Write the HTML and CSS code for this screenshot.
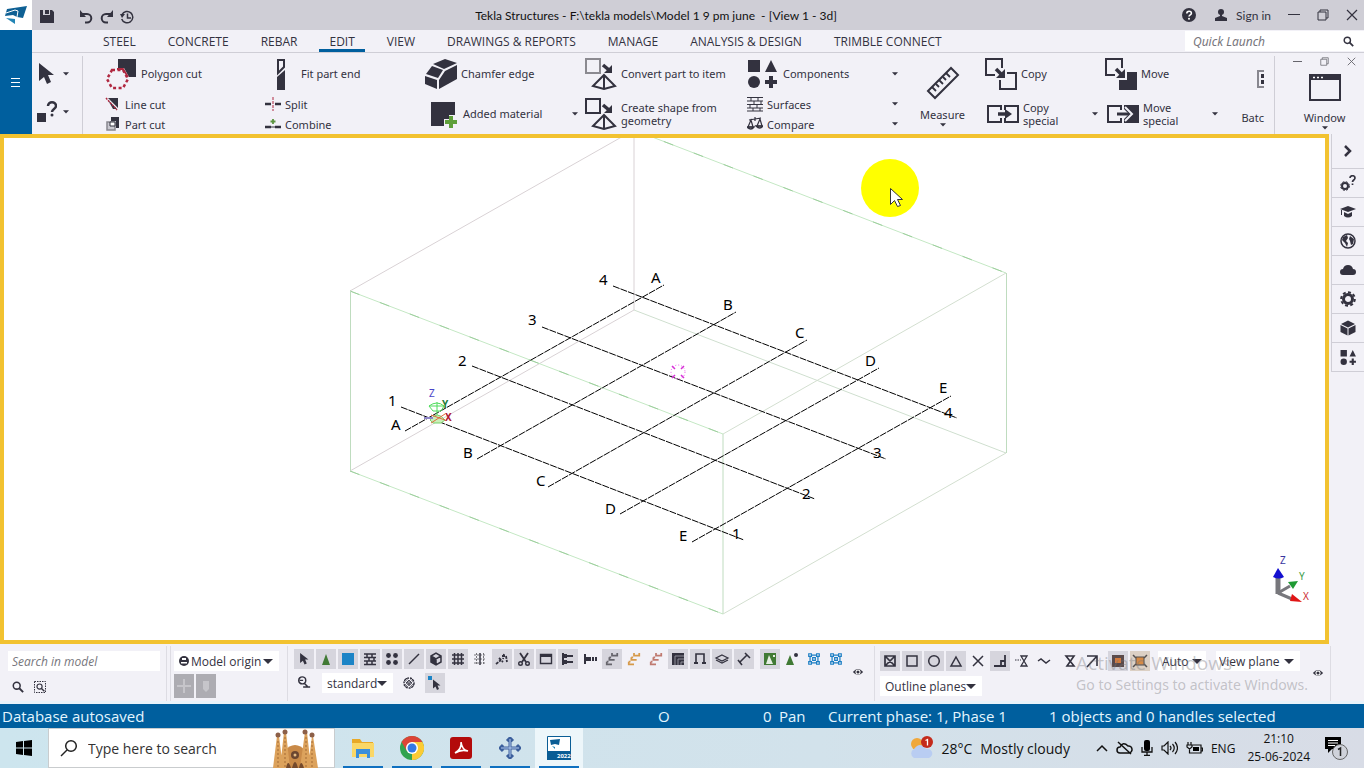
FILE: index.html
```html
<!DOCTYPE html>
<html lang="en">
<head>
    <meta charset="UTF-8">
    <meta name="viewport" content="width=device-width, initial-scale=1.0">
    <title>Tekla Structures</title>
    <link rel="stylesheet" href="styles.css">
</head>
<body>
    <!-- Shared icon shapes -->
    <svg class="defs" aria-hidden="true">
        <symbol id="caret" viewBox="0 0 8 5"><path d="M0 0h8L4 4.500z" fill="#33323f"/></symbol>
        <symbol id="lens" viewBox="0 0 14 14"><circle cx="5.500" cy="5.500" r="4" fill="none" stroke="#33323f" stroke-width="1.800"/><path d="M8.500 8.500l4.500 4.500" stroke="#33323f" stroke-width="2.200"/></symbol>
        <symbol id="eye" viewBox="0 0 14 10"><path d="M1 5q6-7 12 0q-6 7-12 0z" fill="#33323f"/><circle cx="7" cy="5" r="3" fill="#fff"/><circle cx="7" cy="5" r="1.800" fill="#33323f"/></symbol>
        <symbol id="cursor" viewBox="0 0 18 24"><path d="M2 1v18l5-4 3 7 4-2-3-7h6z" fill="#33323f"/></symbol>
        <symbol id="shapes" viewBox="0 0 32 32"><path d="M1 2h12v12H1zM24 2l6 12H18z" fill="#33323f"/><circle cx="7" cy="24" r="6" fill="#33323f"/><path d="M22 18h4v4h4v4h-4v4h-4v-4h-4v-4h4z" fill="#33323f"/></symbol>
        <symbol id="to-shape" viewBox="0 0 32 32"><path d="M18 7l6 5" stroke="#33323f" stroke-width="3.500"/><path d="M27 7v8h-8z" fill="#33323f"/><path d="M19 17L8 28l11 3 11-3zM19 17v14" fill="none" stroke="#33323f" stroke-width="2"/></symbol>
        <symbol id="restore" viewBox="0 0 12 12"><path d="M1 3h8v8H1zM3 3V1h8v8H9" fill="none" stroke="currentColor"/></symbol>
        <symbol id="close" viewBox="0 0 12 12"><path d="M1 1l10 10M11 1L1 11" stroke="currentColor" stroke-width="1.200"/></symbol>
        <symbol id="steps" viewBox="0 0 16 16"><path d="M8 1v3h6V1M5 6v3h6M2 11v3h6M5 6h2M2 11h2" fill="none" stroke="currentColor" stroke-width="2"/></symbol>
        <symbol id="nodes" viewBox="0 0 16 16"><path d="M2 2h3v3H2zM11 2h3v3h-3zM2 11h3v3H2zM11 11h3v3h-3zM6.500 6.500h3v3h-3zM5 3.500h6M5 12.500h6M3.500 5v6M12.500 5v6" fill="none" stroke="#1c7fc4" stroke-width="1.400"/></symbol>
    </svg>

    <div class="app">
        <header class="header">
            <div class="brand">
                <svg width="24" height="20" viewBox="0 0 24 20"><path d="M3 4L23 1l-4 12-6-1-4-2-8 1z" fill="#0e6094"/><path d="M2 13l9 1v5z" fill="#2385b5"/><path d="M2 8l9-3 3 1-1 6" fill="none" stroke="#fff"/></svg>
            </div>
            <div class="titlebar">
                <div class="quick-access">
                    <button aria-label="Save"><svg width="14" height="13" viewBox="0 0 14 13"><path d="M0 0h3v5h7V0h2l2 2v11H0z" fill="#33323f"/><path d="M5 0h3v4H5zM8 0h1v4H8z" fill="#33323f"/></svg></button>
                    <button aria-label="Undo" class="undo"><svg width="13" height="14" viewBox="0 0 13 14"><path d="M2 4h5a4.300 4.300 0 0 1 0 8.600H5" fill="none" stroke="#33323f" stroke-width="2"/><path d="M0 0v7h6z" fill="#33323f"/></svg></button>
                    <button aria-label="Redo"><svg width="13" height="14" viewBox="0 0 13 14"><path d="M11 4H6a4.300 4.300 0 0 0 0 8.600h2" fill="none" stroke="#33323f" stroke-width="2"/><path d="M13 0v7H7z" fill="#33323f"/></svg></button>
                    <button aria-label="History"><svg width="14" height="14" viewBox="0 0 14 14"><path d="M2 4.500a5.700 5.700 0 1 1-.3 4.500M7.500 3.500V8H11" fill="none" stroke="#33323f" stroke-width="1.500"/><path d="M0 4h5L2 8z" fill="#33323f"/></svg></button>
                </div>
                <h1>Tekla Structures - F:\tekla models\Model 1 9 pm june&nbsp; - [View 1 - 3d]</h1>
                <div class="account">
                    <button aria-label="Help"><svg width="14" height="14" viewBox="0 0 14 14"><circle cx="7" cy="7" r="7" fill="#33323f"/><path d="M4.800 5.500c0-3 4.600-3 4.600-.3C9.400 6.800 7 6.800 7 8.600" fill="none" stroke="#fff" stroke-width="1.600"/><circle cx="7" cy="10.800" r="1" fill="#fff"/></svg></button>
                    <button class="signin"><svg width="12" height="12" viewBox="0 0 12 12"><circle cx="6" cy="3" r="3" fill="#33323f"/><path d="M5 5h2v2l5 2v3H0V9l5-2z" fill="#33323f"/></svg>Sign in</button>
                    <button aria-label="Minimize"><svg width="12" height="12" viewBox="0 0 12 12"><path d="M0 5.500h12" stroke="#33323f"/></svg></button>
                    <button aria-label="Restore"><svg width="12" height="12"><use href="#restore"/></svg></button>
                    <button aria-label="Close"><svg width="12" height="12"><use href="#close"/></svg></button>
                </div>
            </div>

            <button class="menu" aria-label="Menu"><svg width="10" height="10" viewBox="0 0 10 10"><path d="M0 1.500h9M0 5.500h9M0 9.500h9" stroke="#fff"/></svg></button>

            <div class="tabrow">
                <nav class="tabs">
                    <a href="#steel">STEEL</a>
                    <a href="#concrete">CONCRETE</a>
                    <a href="#rebar">REBAR</a>
                    <a href="#edit" class="active">EDIT</a>
                    <a href="#view">VIEW</a>
                    <a href="#drawings">DRAWINGS &amp; REPORTS</a>
                    <a href="#manage">MANAGE</a>
                    <a href="#analysis">ANALYSIS &amp; DESIGN</a>
                    <a href="#trimble">TRIMBLE CONNECT</a>
                </nav>
                <div class="launch">
                    <input type="text" placeholder="Quick Launch" aria-label="Quick Launch">
                    <svg width="11" height="11"><use href="#lens" width="11" height="11"/></svg>
                </div>
            </div>

            <div class="ribbon">
                <div class="col pick">
                    <button class="big" aria-label="Select"><svg width="18" height="24"><use href="#cursor"/></svg><svg class="caret"><use href="#caret"/></svg></button>
                    <button class="big" aria-label="Inquire"><svg width="20" height="22" viewBox="0 0 20 22"><path d="M0 12h9v9H0z" fill="#33323f"/><path d="M11 5c0-5 8-5 8 0 0 3-4 3-4 6" fill="none" stroke="#33323f" stroke-width="2.500"/><circle cx="15" cy="14" r="1.500" fill="#33323f"/></svg><svg class="caret"><use href="#caret"/></svg></button>
                </div>

                <div class="col">
                    <button class="big"><svg width="32" height="32" viewBox="0 0 32 32"><path d="M13 1h18v18h-7l-5-9h-6z" fill="#33323f"/><path d="M7 12h11l5 9-5 9H7l-5-9z" fill="none" stroke="#b02840" stroke-width="2.500" stroke-dasharray="3 2.500"/><path d="M12 11h6l5 8" fill="none" stroke="#b02840" stroke-width="1.800"/></svg>Polygon cut</button>
                    <button class="small"><svg width="16" height="14" viewBox="0 0 16 14"><path d="M3 1h10v10z" fill="#33323f"/><path d="M3 3l9 9H8z" fill="#33323f"/><path d="M1 1l11 12" stroke="#b02840" stroke-width="1.500" stroke-dasharray="2 1"/></svg>Line cut</button>
                    <button class="small"><svg width="16" height="14" viewBox="0 0 16 14"><path d="M6 0h8v11h-3V4H6z" fill="#33323f"/><path d="M2 5h8v8H2z" fill="#c9c8d0" stroke="#88878f" stroke-width="1.500"/><path d="M5 5h5v4H5z" fill="#fff" stroke="#33323f"/></svg>Part cut</button>
                </div>

                <div class="col">
                    <button class="big"><svg width="32" height="32" viewBox="0 0 32 32"><path d="M13 2h6v7l-6 6z" fill="none" stroke="#33323f" stroke-width="2"/><path d="M12 19l8-7v20h-8z" fill="#33323f"/></svg>Fit part end</button>
                    <button class="small"><svg width="16" height="14" viewBox="0 0 16 14"><path d="M0 7h6M10 7h6" stroke="#33323f" stroke-width="2.500"/><path d="M8 0v14" stroke="#b02840" stroke-dasharray="3 1"/></svg>Split</button>
                    <button class="small"><svg width="16" height="14" viewBox="0 0 16 14"><path d="M0 10h6M10 10h6" stroke="#33323f" stroke-width="2.500"/><path d="M8 2v5M5.500 4.500h5" stroke="#5c9440" stroke-width="1.800"/><path d="M6 10h4" stroke="#33323f"/></svg>Combine</button>
                </div>

                <div class="col">
                    <button class="big"><svg width="32" height="32" viewBox="0 0 32 32"><path d="M8 6L20 1l12 4-13 6zM7 8l11 4-5 8L1 16zM0 18l12 4v9L0 26zM20 13l12-6v14L14 31v-9z" fill="#33323f"/></svg>Chamfer edge</button>
                    <button class="big"><svg width="34" height="32" viewBox="0 0 34 32"><path d="M6 4h24v13h-6v4h-5v7H6z" fill="#33323f"/><path d="M26 18v12M20 24h12" stroke="#5fa03a" stroke-width="4"/></svg>Added material<svg class="caret"><use href="#caret"/></svg></button>
                </div>

                <div class="col">
                    <button class="big"><svg width="32" height="32" viewBox="0 0 32 32"><path d="M1 1h14v14H1z" fill="none" stroke="#8b8a90" stroke-width="2"/><use href="#to-shape" width="32" height="32"/></svg>Convert part to item</button>
                    <button class="big"><svg width="32" height="32" viewBox="0 0 32 32"><path d="M1 1h14v14H1z" fill="none" stroke="#33323f" stroke-width="2"/><use href="#to-shape" width="32" height="32"/></svg><span>Create shape from<br>geometry</span></button>
                </div>

                <div class="col tools">
                    <button class="big"><svg width="32" height="32"><use href="#shapes"/></svg>Components<svg class="caret"><use href="#caret"/></svg></button>
                    <button class="small"><svg width="16" height="16" viewBox="0 0 16 16"><path d="M0 1.500h16M0 5h16M0 8.500h16M0 12h16M0 15h16" stroke="#33323f" stroke-width="1.200"/><path d="M4 1v4M11 1v4M7 5v4M14 5v4M3 8v4M10 8v4M6 12v3M13 12v3" stroke="#33323f"/></svg>Surfaces<svg class="caret"><use href="#caret"/></svg></button>
                    <button class="small"><svg width="16" height="16" viewBox="0 0 16 16"><path d="M2 4l12-2M8 1v4M4 4l-3 7h5zM13 3l-3 7h5z" fill="none" stroke="#33323f" stroke-width="1.200"/><path d="M0 11h7q-3 4-7 0zM9 10h7q-3 4-7 0z" fill="none" stroke="#33323f" stroke-width="1.300"/></svg>Compare<svg class="caret"><use href="#caret"/></svg></button>
                </div>

                <button class="tall measure">
                    <svg width="34" height="34" viewBox="0 0 34 34"><path d="M2 25L25 2l7 7L9 32z" fill="none" stroke="#33323f" stroke-width="2"/><path d="M6 21l4 4M10 18l3 3M13 14l4 4M17 11l3 3M20 7l4 4" stroke="#33323f" stroke-width="1.800"/></svg>
                    Measure
                    <svg class="caret"><use href="#caret"/></svg>
                </button>

                <div class="col narrow">
                    <button class="big"><svg width="32" height="32" viewBox="0 0 32 32"><path d="M10 17H1V1h16v9M22 15h9v16H15v-9" fill="none" stroke="#33323f" stroke-width="2"/><path d="M11 11l6 6" stroke="#33323f" stroke-width="3.500"/><path d="M20 11v9h-9z" fill="#33323f"/></svg>Copy</button>
                    <button class="big"><svg width="32" height="20" viewBox="0 0 32 20"><path d="M14 6V2H1v16h13v-4M18 6V2h13v16H18v-4" fill="none" stroke="#33323f" stroke-width="2"/><path d="M11 10h8" stroke="#33323f" stroke-width="3.500"/><path d="M18 5l7 5-7 5z" fill="#33323f"/></svg><span>Copy<br>special</span><svg class="caret"><use href="#caret"/></svg></button>
                </div>

                <div class="col narrow">
                    <button class="big"><svg width="32" height="32" viewBox="0 0 32 32"><path d="M10 17H1V1h16v9" fill="none" stroke="#33323f" stroke-width="2"/><path d="M22 14h10v18H14V22h8z" fill="#33323f"/><path d="M11 11l6 6" stroke="#33323f" stroke-width="3.500"/><path d="M20 11v9h-9z" fill="#33323f"/></svg>Move</button>
                    <button class="big"><svg width="32" height="20" viewBox="0 0 32 20"><path d="M14 6V2H1v16h13v-4" fill="none" stroke="#33323f" stroke-width="2"/><path d="M17 1h15v18H17v-4l5-5-5-5z" fill="#33323f"/><path d="M10 10h12" fill="none" stroke="#33323f" stroke-width="3"/><path d="M18 3l7 7-7 7" fill="none" stroke="#f2f1f7" stroke-width="2"/></svg><span>Move<br>special</span><svg class="caret"><use href="#caret"/></svg></button>
                </div>

                <button class="tall batch">
                    <svg width="7" height="18" viewBox="0 0 7 18"><path d="M7 1H1v16h6" fill="none" stroke="#88878f" stroke-width="2"/><path d="M4 4h3v4H4zM4 10h3v4H4z" fill="#33323f"/></svg>
                    Batc
                </button>

                <div class="windows">
                    <div class="mdi">
                        <button aria-label="Minimize view"><svg width="9" height="9" viewBox="0 0 9 9"><path d="M0 4.500h9" stroke="currentColor"/></svg></button>
                        <button aria-label="Restore view"><svg width="9" height="9"><use href="#restore" width="9" height="9"/></svg></button>
                        <button aria-label="Close view"><svg width="9" height="9"><use href="#close" width="9" height="9"/></svg></button>
                    </div>
                    <button class="tall window">
                        <svg width="32" height="27" viewBox="0 0 32 27"><path d="M1 1h30v25H1z" fill="none" stroke="#33323f" stroke-width="2"/><path d="M1 1h30v5H1z" fill="#33323f"/><path d="M4 3.500h2M8 3.500h2M12 3.500h2" stroke="#fff" stroke-width="1.500"/></svg>
                        Window
                        <svg class="caret"><use href="#caret"/></svg>
                    </button>
                </div>
            </div>
        </header>

        <main class="workspace">
            <section class="view">
                <svg viewBox="4 138 1321 502" preserveAspectRatio="xMidYMid meet" role="img" aria-label="3d view">
                    <!-- Work area box -->
                    <g fill="none" stroke-width="1">
                        <path d="M350 471L634 310M350 291L634 130M634 130V310" stroke="#d9d2d5"/>
                        <path d="M634 310L1006 453" stroke="#cfdfcf"/>
                        <path d="M634 130L1006 273M350 291L723 434M350 471L723 614" stroke="#c4e8c4"/>
                        <path d="M634 130L1006 273M350 291L723 434M350 471L723 614" stroke="#9dcf9d" stroke-dasharray="10 22"/>
                        <path d="M350.500 291V471M1006.500 273V453M723 434V614" stroke="#bfdcbf"/>
                        <path d="M723 434L1006 273M723 614L1006 453" stroke="#d3dfd0"/>
                    </g>
                    <!-- Grid -->
                    <g stroke="#000" stroke-width="1" stroke-dasharray="7 1">
                        <path d="M405 431L664 285M477 459L736 312M548 487L807 340M620 514L879 368M692 542L951 396"/>
                        <path d="M401 407L744 540M472 366L815 499M542 327L886 459M613 286L957 418"/>
                    </g>
                    <g class="grid-label">
                        <text x="391" y="430">A</text><text x="463" y="458">B</text><text x="536" y="486">C</text><text x="605" y="514">D</text><text x="679" y="541">E</text>
                        <text x="651" y="283">A</text><text x="723" y="310">B</text><text x="795" y="338">C</text><text x="865" y="366">D</text><text x="939" y="393">E</text>
                        <text x="388" y="406">1</text><text x="458" y="366">2</text><text x="528" y="325">3</text><text x="599" y="285">4</text>
                        <text x="732" y="539">1</text><text x="802" y="499">2</text><text x="873" y="458">3</text><text x="944" y="418">4</text>
                    </g>
                    <!-- Origin marker -->
                    <g fill="none" stroke-width="1">
                        <path d="M429 406q8-6 15 0l-3 5h-8zM437 402v19M429 406h15" stroke="#4fdc5c"/>
                        <path d="M430 420q7-10 15 0l-4 3h-8z" fill="#c9efb8" stroke="#7bcf6a"/>
                        <path d="M431 415l14 5M445 414l-14 9" stroke="#e0693f"/>
                        <path d="M424 418h9" stroke="#8f86c9" stroke-width="2"/>
                    </g>
                    <g class="axis">
                        <text x="429" y="397" fill="#4a45c8">Z</text>
                        <text class="bold" x="442" y="408" fill="#1d7c3a">Y</text>
                        <text class="bold" x="445" y="421" fill="#b01830">X</text>
                        <text x="1280" y="564" fill="#3a36a0">Z</text>
                        <text x="1299" y="580" fill="#3da04a">Y</text>
                        <text x="1303" y="600" fill="#cc2a30">X</text>
                    </g>
                    <!-- View centre -->
                    <path d="M672 366l3 3M672 378l3-3M684 366l-3 3M684 378l-3-3" stroke="#d631d6" stroke-width="1.500"/>
                    <circle cx="678" cy="372" r="7" fill="none" stroke="#ee55ee" stroke-dasharray="1 2"/>
                    <!-- Axis triad -->
                    <path d="M1278 593l12-7M1278 593l14 6" stroke="#77777c" stroke-width="3"/>
                    <path d="M1278 594v-18" stroke="#77777c" stroke-width="5"/>
                    <path d="M1273 577l5-9 6 9q-5 3-11 0z" fill="#1410d0"/>
                    <path d="M1288 582l10-1-5 8z" fill="#1f9a34"/>
                    <path d="M1292 594l10 8-12-1z" fill="#e01515"/>
                    <!-- Pointer highlight -->
                    <circle cx="890" cy="188" r="29" fill="#ffff00"/>
                    <path d="M890.500 188.500v16l4-4 3 6 3-1-3-6h5z" fill="#fff" stroke="#333"/>
                </svg>
            </section>
            <aside class="sidebar">
                <button aria-label="Expand"><svg width="10" height="12" viewBox="0 0 10 12"><path d="M2 1l5 5-5 5" fill="none" stroke="#33323f" stroke-width="2.500"/></svg></button>
                <button aria-label="Property help"><svg width="16" height="16" viewBox="0 0 16 16"><circle cx="5" cy="11" r="3" fill="none" stroke="#33323f" stroke-width="2"/><circle cx="5" cy="11" r="4.400" fill="none" stroke="#33323f" stroke-dasharray="2 1.500"/><path d="M10 3c0-3 5-3 5 0 0 2-2.500 2-2.500 4M12.500 8.500v1.500" fill="none" stroke="#33323f" stroke-width="1.700"/></svg></button>
                <button aria-label="Learning"><svg width="16" height="14" viewBox="0 0 16 14"><path d="M8 1l8 3-8 3-8-3zM4 7l4 2 4-2v4q-4 3-8 0zM1 5h1v5H1z" fill="#33323f"/></svg></button>
                <button aria-label="Online"><svg width="16" height="16" viewBox="0 0 16 16"><circle cx="8" cy="8" r="7" fill="none" stroke="#33323f" stroke-width="1.500"/><path d="M3 4l4-2 1 3-2 3 2 2-1 4-2-4-3-3zM10 3l4 3-1 5-2 1-1-4-1-2z" fill="#33323f"/></svg></button>
                <button aria-label="Cloud"><svg width="16" height="12" viewBox="0 0 16 12"><path d="M3 11a3 3 0 0 1 0-6q1-4 5-4t5 4a3 3 0 0 1 0 6z" fill="#33323f"/></svg></button>
                <button aria-label="Properties"><svg width="16" height="16" viewBox="0 0 16 16"><circle cx="8" cy="8" r="4.500" fill="none" stroke="#33323f" stroke-width="3"/><circle cx="8" cy="8" r="6.800" fill="none" stroke="#33323f" stroke-width="2" stroke-dasharray="3 2.300"/></svg></button>
                <button aria-label="Reference models"><svg width="16" height="16" viewBox="0 0 16 16"><path d="M1 4l7-3.500L15 4l-7 3.500zM0.500 5L7.500 8.500v7L0.500 12zM15.500 5L8.500 8.500v7L15.500 12z" fill="#33323f"/></svg></button>
                <button aria-label="Applications"><svg width="17" height="17"><use href="#shapes" width="17" height="17"/></svg></button>
            </aside>
        </main>

        <footer class="toolbars">
            <div class="panel find">
                <input type="text" placeholder="Search in model" aria-label="Search in model">
                <div class="row">
                    <button class="tool" aria-label="Find"><svg width="12" height="12"><use href="#lens" width="12" height="12"/></svg></button>
                    <button class="tool" aria-label="Find in selection"><svg width="12" height="12" viewBox="0 0 12 12"><path d="M.5.5h11v11H.5z" fill="none" stroke="#33323f" stroke-dasharray="1.500 1"/><use href="#lens" x="2" y="2" width="9" height="9"/></svg></button>
                </div>
            </div>

            <div class="panel origin">
                <label class="pick-list origin-list">
                    <svg width="10" height="10" viewBox="0 0 10 10"><circle cx="5" cy="5" r="5" fill="#33323f"/><path d="M3 2h4v2H3zM2 6h6v1.500H2z" fill="#fff"/></svg>
                    <select aria-label="Origin"><option>Model origin</option></select>
                </label>
                <div class="row pair">
                    <button class="tool off" aria-label="Add origin" disabled><svg width="16" height="16" viewBox="0 0 16 16"><path d="M8 1v14M1 8h14" stroke="#c6c5ca" stroke-width="2"/></svg></button>
                    <button class="tool off" aria-label="Pick origin" disabled><svg width="16" height="16" viewBox="0 0 16 16"><path d="M5 3h6v8l-3 3-3-3z" fill="#c6c5ca"/></svg></button>
                </div>
            </div>

            <div class="panel selecting">
                <div>
                    <div class="row">
                        <button class="tool on" aria-label="Select all"><svg width="10" height="14"><use href="#cursor"/></svg></button>
                        <button class="tool on" aria-label="Components"><svg width="16" height="16" viewBox="0 0 16 16"><path d="M8 3l4 11H4z" fill="#417a35"/></svg></button>
                        <button class="tool on" aria-label="Parts"><svg width="16" height="16" viewBox="0 0 16 16"><path d="M2 2h12v12H2z" fill="#1c84c6"/></svg></button>
                        <button class="tool on" aria-label="Surface treatments"><svg width="16" height="16" viewBox="0 0 16 16"><path d="M2 3h12M2 6.500h12M2 10h12M2 13.500h12M5 3v3M10 3v3M7 7v3M12 7v3M5 10v3M10 10v3" stroke="#33323f" stroke-width="1.500"/></svg></button>
                        <button class="tool on" aria-label="Points"><svg width="16" height="16" viewBox="0 0 16 16"><g fill="#33323f"><circle cx="4.500" cy="4.500" r="2.400"/><circle cx="11.500" cy="4.500" r="2.400"/><circle cx="4.500" cy="11.500" r="2.400"/><circle cx="11.500" cy="11.500" r="2.400"/></g></svg></button>
                        <button class="tool on" aria-label="Lines"><svg width="16" height="16" viewBox="0 0 16 16"><path d="M3 13L13 3" stroke="#33323f" stroke-width="1.500"/></svg></button>
                        <button class="tool on" aria-label="Reference models"><svg width="16" height="16" viewBox="0 0 16 16"><path d="M3 5l5-3 5 3v6l-5 3-5-3zM3 5l5 3 5-3M8 8v6" fill="none" stroke="#33323f" stroke-width="1.500"/><path d="M3 5l5 3v6l-5-3z" fill="#33323f"/></svg></button>
                        <button class="tool on" aria-label="Grids"><svg width="16" height="16" viewBox="0 0 16 16"><path d="M2 4h12M2 8h12M2 12h12M4.500 2v12M8 2v12M11.500 2v12" stroke="#33323f" stroke-width="1.500"/></svg></button>
                        <button class="tool" aria-label="Grid line"><svg width="16" height="16" viewBox="0 0 16 16"><path d="M2 4h12M2 8h12M2 12h12M4.500 2v12M11.500 2v12" stroke="#77767c" stroke-dasharray="2 1"/><path d="M8 2v12" stroke="#33323f" stroke-width="1.500"/></svg></button>
                        <button class="tool on" aria-label="Welds"><svg width="16" height="16" viewBox="0 0 16 16"><path d="M2 13l5-4M5 7l4 4M8 5h4l1 6M10 3l-1 5" fill="none" stroke="#33323f" stroke-width="1.800" stroke-dasharray="3 1"/></svg></button>
                        <button class="tool on" aria-label="Cuts"><svg width="16" height="16" viewBox="0 0 16 16"><path d="M4 2l6 9M12 2L6 11" stroke="#33323f" stroke-width="1.800"/><circle cx="4.500" cy="12.500" r="1.800" fill="none" stroke="#33323f" stroke-width="1.400"/><circle cx="11.500" cy="12.500" r="1.800" fill="none" stroke="#33323f" stroke-width="1.400"/></svg></button>
                        <button class="tool on" aria-label="Views"><svg width="16" height="16" viewBox="0 0 16 16"><path d="M2.500 3.500h11v9h-11z" fill="none" stroke="#33323f" stroke-width="1.400"/><path d="M2 3h12v3H2z" fill="#33323f"/></svg></button>
                        <button class="tool on" aria-label="Bolt groups"><svg width="16" height="16" viewBox="0 0 16 16"><path d="M3 2v12M3 5h10M3 11h10" stroke="#33323f" stroke-width="2"/><path d="M3 3h4v4H3zM3 9h4v4H3z" fill="#33323f"/></svg></button>
                        <button class="tool" aria-label="Single bolts"><svg width="16" height="16" viewBox="0 0 16 16"><path d="M2 3h2v10H2zM4 6h3v4H4z" fill="#33323f"/><path d="M7 8h8" stroke="#33323f" stroke-width="4" stroke-dasharray="2 1"/></svg></button>
                        <button class="tool on steps-grey" aria-label="Reinforcement"><svg width="14" height="14"><use href="#steps"/></svg></button>
                        <button class="tool steps-amber" aria-label="Rebar groups"><svg width="14" height="14"><use href="#steps"/></svg></button>
                        <button class="tool steps-red" aria-label="Single rebars"><svg width="14" height="14"><use href="#steps"/></svg></button>
                        <button class="tool on" aria-label="Pour objects"><svg width="16" height="16" viewBox="0 0 16 16"><path d="M2 2h12v12H2z" fill="#33323f"/><path d="M5 14V5h9M8 14V8h6M11 14v-3h3" fill="none" stroke="#8f8e99"/></svg></button>
                        <button class="tool on" aria-label="Pour breaks"><svg width="16" height="16" viewBox="0 0 16 16"><path d="M4 13V3h8v10" fill="none" stroke="#33323f" stroke-width="1.600"/><path d="M2 12h4M10 12h4" stroke="#33323f" stroke-width="2"/></svg></button>
                        <button class="tool on" aria-label="Planes"><svg width="16" height="16" viewBox="0 0 16 16"><path d="M8 4l6 3-6 3-6-3zM2 9l6 3 6-3" fill="none" stroke="#33323f" stroke-width="1.200"/></svg></button>
                        <button class="tool on" aria-label="Distances"><svg width="16" height="16" viewBox="0 0 16 16"><path d="M4 11l7-7M2 9l4 5M9 2l5 5" stroke="#33323f" stroke-width="1.600"/></svg></button>
                        <button class="tool on next" aria-label="Select components"><svg width="16" height="16" viewBox="0 0 16 16"><path d="M2 2h12v12H2z" fill="#417a35"/><path d="M7 4l4 9H4zM11 4h2v2h-2z" fill="#e6eee2"/></svg></button>
                        <button class="tool" aria-label="Objects in components"><svg width="16" height="16" viewBox="0 0 16 16"><path d="M6 4l4 10H2z" fill="#417a35"/><circle cx="12" cy="4" r="2" fill="#33323f"/></svg></button>
                        <button class="tool" aria-label="Assemblies"><svg width="14" height="14"><use href="#nodes"/></svg></button>
                        <button class="tool" aria-label="Objects in assemblies"><svg width="14" height="14"><use href="#nodes"/></svg></button>
                    </div>
                    <div class="row">
                        <button class="tool" aria-label="Filter"><svg width="14" height="14" viewBox="0 0 16 16"><circle cx="6" cy="5" r="4" fill="none" stroke="#33323f" stroke-width="1.700"/><path d="M8 8l4 4M3 5h4M7 12.500h8" stroke="#33323f" stroke-width="1.700"/></svg></button>
                        <label class="pick-list filter-list"><select aria-label="Selection filter"><option>standard</option></select></label>
                        <button class="tool" aria-label="Filter settings"><svg width="14" height="14" viewBox="0 0 14 14"><circle cx="7" cy="7" r="5" fill="none" stroke="#33323f" stroke-width="1.500" stroke-dasharray="2 1"/><path d="M4 2l8 8M2 4l8 8M10 2l-8 8M12 4l-8 8M3 3l8 8M11 3l-8 8" stroke="#33323f" stroke-width="1" stroke-dasharray="2 1"/></svg></button>
                        <button class="tool on" aria-label="Direct modification"><svg width="16" height="16" viewBox="0 0 16 16"><path d="M1 1h4v4H1z" fill="#1c84c6"/><use href="#cursor" x="5" y="4" width="9" height="12"/></svg></button>
                    </div>
                </div>
                <button class="look" aria-label="Show toolbar options"><svg width="12" height="10"><use href="#eye"/></svg></button>
            </div>

            <div class="panel snapping">
                <div>
                    <div class="row">
                        <button class="tool on" aria-label="Snap to reference points"><svg width="16" height="16" viewBox="0 0 16 16"><path d="M3 3h10v10H3zM3 3l10 10M13 3L3 13" fill="none" stroke="#33323f" stroke-width="1.700"/></svg></button>
                        <button class="tool on" aria-label="Snap to geometry"><svg width="16" height="16" viewBox="0 0 16 16"><path d="M3 3h10v10H3z" fill="none" stroke="#33323f" stroke-width="1.500"/></svg></button>
                        <button class="tool on" aria-label="Snap to centre"><svg width="16" height="16" viewBox="0 0 16 16"><circle cx="8" cy="8" r="5.300" fill="none" stroke="#33323f" stroke-width="1.500"/></svg></button>
                        <button class="tool on" aria-label="Snap to midpoint"><svg width="16" height="16" viewBox="0 0 16 16"><path d="M8 4l5 9H3z" fill="none" stroke="#33323f" stroke-width="1.500"/></svg></button>
                        <button class="tool" aria-label="Snap to intersection"><svg width="16" height="16" viewBox="0 0 16 16"><path d="M3 3l10 10M13 3L3 13" stroke="#33323f" stroke-width="1.500"/></svg></button>
                        <button class="tool on" aria-label="Snap perpendicular"><svg width="16" height="16" viewBox="0 0 16 16"><path d="M2 13h12M13 2v11M9 13V8h4" fill="none" stroke="#33323f" stroke-width="1.800"/></svg></button>
                        <button class="tool" aria-label="Snap to extension"><svg width="16" height="16" viewBox="0 0 16 16"><path d="M7 3h6l-6 10h6L7 3z" fill="none" stroke="#33323f" stroke-width="1.300"/><path d="M1 7h6" stroke="#33323f" stroke-dasharray="1.500 1"/></svg></button>
                        <button class="tool" aria-label="Snap to any"><svg width="16" height="16" viewBox="0 0 16 16"><path d="M2 8l3-2 5 4 4-3" fill="none" stroke="#33323f" stroke-width="1.500"/></svg></button>
                        <button class="tool next" aria-label="Snap to nearest"><svg width="16" height="16" viewBox="0 0 16 16"><path d="M4 3h8L5 13h7L4 3z" fill="none" stroke="#33323f" stroke-width="1.600"/></svg></button>
                        <button class="tool" aria-label="Snap to lines"><svg width="16" height="16" viewBox="0 0 16 16"><path d="M3 3h10v10M3 14L13 3" fill="none" stroke="#33323f" stroke-width="1.600"/></svg></button>
                        <button class="tool on next" aria-label="Snap to dimension points"><svg width="16" height="16" viewBox="0 0 16 16"><path d="M2 2h12v12H2z" fill="#5a4a4a"/><path d="M5 5h6v5H5z" fill="#d27a3c"/></svg></button>
                        <button class="tool on warm" aria-label="Snap to model objects"><svg width="16" height="16" viewBox="0 0 16 16"><path d="M4 4h8v8H4z" fill="#d58a45" stroke="#55504f"/><path d="M1 2l3 3M15 2l-3 3M1 14l3-3M15 14l-3-3" stroke="#55504f" stroke-width="1.500"/></svg></button>
                        <label class="pick-list auto-list"><select aria-label="Plane type"><option>Auto</option></select></label>
                        <label class="pick-list plane-list"><select aria-label="Work plane"><option>View plane</option></select></label>
                    </div>
                    <div class="row">
                        <label class="pick-list outline-list"><select aria-label="Outline"><option>Outline planes</option></select></label>
                    </div>
                </div>
                <button class="look" aria-label="Show snap options"><svg width="12" height="10"><use href="#eye"/></svg></button>
                <div class="watermark"><strong>Activate Windows</strong><span>Go to Settings to activate Windows.</span></div>
            </div>
        </footer>

        <div class="status">
            <span>Database autosaved</span>
            <span>O</span>
            <span>0</span>
            <span>Pan</span>
            <span>Current phase: 1, Phase 1</span>
            <span>1 objects and 0 handles selected</span>
        </div>

        <div class="taskbar">
            <button class="start" aria-label="Start"><svg width="16" height="16" viewBox="0 0 16 16"><path d="M0 2l7-1v6.500H0zM8 1l8-1v7.500H8zM0 8.500h7V15l-7-1zM8 8.500h8V16l-8-1z"/></svg></button>
            <div class="search">
                <svg width="18" height="18" viewBox="0 0 18 18"><circle cx="11" cy="7" r="5.300" fill="none" stroke="#222" stroke-width="1.500"/><path d="M7 11l-6 6" stroke="#222" stroke-width="1.500"/></svg>
                <input type="text" placeholder="Type here to search" aria-label="Type here to search">
                <svg width="46" height="39" viewBox="0 0 46 39">
                    <path d="M12 22q11-12 22 0v17H12z" fill="#c98a48"/>
                    <path d="M1 39L5 7h2l4 32zM8 39l4-36h2l4 36zM28 39l5-36h2l4 36zM36 39l4-32h1l5 32z" fill="#dca25c"/>
                    <path d="M6 12v27M13 8v31M34 8v31M40 12v27" stroke="#a36a34" stroke-dasharray="2 2"/>
                    <g fill="#8c5f48"><circle cx="6" cy="6" r="2.500"/><circle cx="13" cy="3" r="2.500"/><circle cx="33" cy="3" r="2.500"/><circle cx="40" cy="6" r="2.500"/></g>
                    <circle cx="23" cy="26" r="4" fill="#6b4630"/><circle cx="23" cy="26" r="1.500" fill="#e6bd85"/>
                    <path d="M14 39q2-10 5 0zM20 39q3-12 6 0zM27 39q2-10 5 0z" fill="#754a2c"/>
                </svg>
            </div>
            <div class="apps">
                <button aria-label="File Explorer"><svg width="24" height="24" viewBox="0 0 24 24"><path d="M1 3h8l2 3h11v15H1z" fill="#e8a927"/><path d="M1 7h22v14H1z" fill="#fad766"/><path d="M5 13h14v9h-3v-4H8v4H5z" fill="#3a8edb"/></svg></button>
                <button aria-label="Chrome"><svg width="24" height="24" viewBox="0 0 24 24"><circle cx="12" cy="12" r="12" fill="#32a350"/><path d="M12 12L1.600 6A12 12 0 0 1 22.400 6z" fill="#dc4437"/><path d="M12 12V6h10.400A12 12 0 0 1 12 24z" fill="#fccb34"/><path d="M1.600 6L6.800 15 12 12V6z" fill="#dc4437"/><path d="M12 24l5.200-9L12 12z" fill="#fccb34"/><circle cx="12" cy="12" r="6" fill="#fff"/><circle cx="12" cy="12" r="4.500" fill="#3478e5"/></svg></button>
                <button aria-label="Acrobat"><svg width="22" height="22" viewBox="0 0 22 22"><rect width="22" height="22" rx="3" fill="#b30b0b"/><path d="M5 16q7-4 6-11q1 8 7 9q-7-2-13 2z" fill="none" stroke="#fff" stroke-width="1.600"/></svg></button>
                <button aria-label="Move tool"><svg width="22" height="22" viewBox="0 0 22 22"><path d="M11 2v18M2 11h18M8 4l3-3 3 3M8 18l3 3 3-3M4 8l-3 3 3 3M18 8l3 3-3 3" fill="none" stroke="#3c5f9c" stroke-width="3"/><path d="M11 2v18M2 11h18" stroke="#b4cdf0"/></svg></button>
                <button class="current" aria-label="Tekla Structures 2022"><svg width="24" height="24" viewBox="0 0 24 24"><path d="M.5.500h23v23H.5z" fill="#fff" stroke="#0a5d95"/><path d="M0 15h24v9H0z" fill="#0a5d95"/><path d="M3 4l10-1-1 6-4-1-4 1z" fill="#0a5d95"/><path d="M5 10l3 1v2z" fill="#2385b5"/><text x="10" y="22">2022</text></svg></button>
            </div>
            <div class="tray">
                <button class="weather"><svg width="24" height="24" viewBox="0 0 24 24"><circle cx="8" cy="8" r="6" fill="#f0a83c"/><path d="M5 22a5 5 0 0 1 0-9q6-8 12 0a4.500 4.500 0 0 1 3 9z" fill="#b9cdf2"/><circle cx="18" cy="6" r="6" fill="#c42b1c"/><path d="M16.500 4.500l2-1v6" fill="none" stroke="#fff" stroke-width="1.300"/></svg><span>28°C</span><span>Mostly cloudy</span></button>
                <button aria-label="Hidden icons"><svg width="12" height="8" viewBox="0 0 12 8"><path d="M1 7l5-5 5 5" fill="none" stroke="#111" stroke-width="1.500"/></svg></button>
                <button aria-label="OneDrive"><svg width="17" height="14" viewBox="0 0 17 14"><path d="M4 12a3 3 0 0 1 0-6q3-6 8-1a3.500 3.500 0 0 1 1 7zM2 1l13 12" fill="none" stroke="#111" stroke-width="1.500"/></svg></button>
                <button aria-label="Microphone"><svg width="12" height="16" viewBox="0 0 12 16"><rect x="3" width="6" height="11" rx="2"/><path d="M1 7v5h10V7M6 12v4M3 15.500h6" fill="none" stroke="#111" stroke-width="1.300"/></svg></button>
                <button aria-label="Volume"><svg width="17" height="14" viewBox="0 0 17 14"><path d="M1 5h2l4-4v12L3 9H1zM9 5q2 2 0 4M11.500 3q3.500 4 0 8M14 1q5 6 0 12" fill="none" stroke="#111" stroke-width="1.200"/></svg></button>
                <button aria-label="Battery"><svg width="17" height="14" viewBox="0 0 17 14"><path d="M5 4h10v8H5M15 7h1.500v3H15M2 1v3M5 1v3M1 4h5v2L3.500 8 1 6zM3.500 8v4H5" fill="none" stroke="#111" stroke-width="1.200"/><path d="M7 6h6v4H7z"/></svg></button>
                <button class="lang">ENG</button>
                <button class="clock"><span>21:10</span><span>25-06-2024</span></button>
                <button class="notes" aria-label="Notifications"><svg width="24" height="24" viewBox="0 0 24 24"><path d="M0 1h16v12H7l-4 4v-4H0z"/><path d="M3 4.500h10M3 7h10M3 9.500h7" stroke="#fff"/><circle cx="15" cy="16" r="7.500" fill="#cfd2da" stroke="#666"/><path d="M13 13.500l2.500-1.500v8" fill="none" stroke="#222" stroke-width="1.500"/></svg></button>
            </div>
        </div>
    </div>
</body>
</html>
```

FILE: styles.css
```css
/* styles.css */
* {
    box-sizing: border-box;
}

body {
    margin: 0;
    font-family: "Noto Sans", "Open Sans", sans-serif;
    font-size: 11px;
    color: #33323f;
    background-color: #f2f1f7;
}

button {
    display: flex;
    align-items: center;
    padding: 0;
    border: none;
    background: none;
    font: inherit;
    color: inherit;
    text-align: left;
    white-space: nowrap;
}

input, select {
    border: none;
    outline: none;
    font: inherit;
    color: inherit;
    min-width: 0;
}

svg {
    display: block;
    flex: none;
}

.defs {
    position: absolute;
    width: 0;
    height: 0;
}

.app {
    display: flex;
    flex-direction: column;
    min-height: 100vh;
}

/* Header */
.header {
    display: grid;
    grid-template-columns: 32px 1fr;
    grid-template-rows: 30px 23px 81px;
}

.brand {
    background-color: #fff;
    padding: 5px 4px;
}

.titlebar {
    display: grid;
    grid-template-columns: 300px 1fr 384px;
    align-items: center;
    background-color: #cfced6;
}

.titlebar h1 {
    margin: 0;
    font-family: Lato, "Open Sans", sans-serif;
    font-size: 12px;
    font-weight: normal;
    text-align: center;
    white-space: nowrap;
    color: #111;
}

.quick-access {
    display: flex;
    gap: 7px;
    padding: 3px 0 0 8px;
}

.quick-access .undo {
    margin-left: 19px;
}

.account {
    display: flex;
    justify-content: flex-end;
    align-items: center;
    gap: 17px;
    padding-right: 6px;
    font-family: Lato, "Open Sans", sans-serif;
    font-size: 12px;
}

.account .signin {
    gap: 9px;
    margin-left: 2px;
}

.menu {
    grid-row: 2 / 4;
    justify-content: center;
    background-color: #005f9e;
}

.tabrow {
    display: flex;
    justify-content: space-between;
    border-bottom: 1px solid #cfced6;
}

.tabs {
    display: flex;
    gap: 12px;
    padding-left: 61px;
    font-family: "Open Sans", sans-serif;
    font-size: 12px;
}

.tabs a {
    padding: 0 10px;
    line-height: 23px;
    color: #33323f;
    text-decoration: none;
    white-space: nowrap;
}

.tabs .active {
    box-shadow: inset 0 -3px #005f9e;
}

.launch {
    display: flex;
    align-items: center;
    width: 179px;
    margin: 1px 0;
    padding: 0 10px 0 6px;
    background-color: #fff;
}

.launch input {
    flex: 1;
    font-size: 12px;
    font-style: italic;
}

::placeholder {
    color: #77767c;
    opacity: 1;
}

/* Ribbon */
.ribbon {
    display: flex;
    min-width: 0;
}

.caret {
    width: 6px;
    height: 4px;
}

.col {
    flex: none;
    width: 160px;
    padding-left: 5px;
}

.col .big {
    width: 100%;
    height: 39px;
    gap: 4px;
    line-height: 13px;
}

.col .big:first-child {
    height: 41px;
}

.col .small {
    width: 100%;
    height: 20px;
    gap: 4px;
}

.big .caret, .small .caret {
    margin-left: auto;
    margin-right: 2px;
}

.pick {
    width: 51px;
    margin: 3px 17px 0 0;
    border-right: 1px solid #cfced6;
}

.pick .big:first-child {
    height: 36px;
}

.pick .big .caret {
    margin-right: 13px;
}

.tools {
    padding-left: 7px;
}

.narrow {
    width: 120px;
    padding-left: 0;
}

.narrow .big + .big {
    padding-left: 2px;
}

.narrow .big .caret {
    margin-right: 7px;
}

.tall {
    flex-direction: column;
    flex: none;
    align-items: center;
}

.measure {
    width: 85px;
    padding: 13px 0 0;
    gap: 7px;
}

.measure .caret {
    margin-top: -6px;
}

.batch {
    width: 39px;
    padding-top: 17px;
    gap: 22px;
    align-items: flex-end;
}

.windows {
    flex: 1;
    margin: 3px 0 0 10px;
    border-left: 1px solid #cfced6;
}

.mdi {
    display: flex;
    justify-content: flex-end;
    gap: 18px;
    padding-right: 8px;
    height: 10px;
    color: #66656c;
}

.window {
    width: 100%;
    padding: 8px 0 0 10px;
    gap: 9px;
}

.window .caret {
    margin-top: -8px;
}

/* Workspace */
.workspace {
    display: flex;
    flex: 1;
    min-height: 300px;
}

.view {
    flex: 1;
    min-width: 0;
    border: 4px solid #f2c230;
    background-color: #fff;
}

.view svg {
    width: 100%;
    height: 100%;
}

.grid-label {
    font-size: 15px;
}

.axis {
    font-size: 10px;
}

.axis .bold {
    font-weight: bold;
}

.sidebar {
    width: 35px;
    padding-left: 2px;
}

.sidebar button {
    justify-content: center;
    width: 100%;
    height: 29px;
    border-left: 1px solid #cfced6;
    border-bottom: 1px solid #cfced6;
}

.sidebar button:first-child {
    height: 35px;
}

/* Bottom toolbars */
.toolbars {
    display: flex;
    height: 60px;
    border-bottom: 3px solid #e8f3fa;
    font-family: "Open Sans", sans-serif;
    font-size: 12px;
}

.panel {
    margin-top: 2px;
    border-right: 1px solid #dddce3;
}

.row {
    display: flex;
    align-items: center;
    gap: 2px;
}

.tool {
    justify-content: center;
    width: 20px;
    height: 20px;
}

.tool.on {
    background-color: #d6d5dd;
}

.tool.off {
    height: 24px;
    background-color: #adacb2;
}

.tool.warm {
    background-color: #dcd0c4;
}

.tool.next {
    margin-left: 4px;
}

.steps-grey {
    color: #66656c;
}

.steps-amber {
    color: #d69a4a;
}

.steps-red {
    color: #c07a70;
}

.find {
    width: 167px;
    padding: 5px 6px 0 8px;
}

.find input {
    width: 100%;
    height: 20px;
    margin-bottom: 6px;
    padding: 0 4px;
    font-style: italic;
}

.origin {
    width: 118px;
    margin-left: 3px;
    padding: 5px 8px 0 3px;
    border-left: 1px solid #dddce3;
}

.pair {
    margin-top: 3px;
}

.pick-list {
    display: flex;
    align-items: center;
    gap: 2px;
    height: 20px;
    padding: 0 6px 0 5px;
    background-color: #fff;
}

.pick-list select {
    flex: 1;
    padding: 0;
    background: none;
    appearance: none;
}

.pick-list::after {
    content: "";
    margin-left: -2px;
    border: 5px solid transparent;
    border-top-color: #33323f;
    border-bottom: none;
}

.filter-list {
    width: 71px;
    margin: 0 4px 0 6px;
}

.selecting {
    display: flex;
    width: 587px;
    padding: 3px 10px 0 0;
}

.selecting > div {
    padding-left: 6px;
}

.selecting .row + .row {
    margin-top: 4px;
}

.selecting .row:last-child .tool:last-child {
    margin-left: 4px;
}

.look {
    margin-left: auto;
    padding-bottom: 6px;
}

.snapping {
    position: relative;
    display: flex;
    flex: 1;
    max-width: 456px;
    padding: 5px 6px 0 5px;
}

.snapping .row + .row {
    margin-top: 5px;
}

.auto-list {
    width: 48px;
    margin-left: 6px;
    padding: 0 4px;
}

.plane-list {
    width: 84px;
    margin-left: 8px;
    padding-left: 3px;
}

.outline-list {
    width: 102px;
}

.watermark {
    position: absolute;
    right: 22px;
    bottom: 6px;
    display: flex;
    flex-direction: column;
    color: rgba(120, 120, 125, 0.4);
    font-family: "Noto Sans", sans-serif;
    font-size: 14px;
    line-height: 20px;
    white-space: nowrap;
    pointer-events: none;
}

.watermark strong {
    font-family: "Open Sans", sans-serif;
    font-size: 19px;
    font-weight: normal;
    line-height: 24px;
}

/* Status line */
.status {
    display: grid;
    grid-template-columns: 656px 105px 16px 49px 221px 1fr;
    padding-left: 2px;
    background-color: #005f9e;
    color: #e4f6ff;
    font-family: "Open Sans", sans-serif;
    font-size: 15px;
    line-height: 24px;
    white-space: nowrap;
}

/* Taskbar */
.taskbar {
    display: flex;
    height: 40px;
    background: linear-gradient(90deg, #cde5ee, #d2e2eb 60%, #d8dce6);
    color: #111;
    font-family: "Open Sans", sans-serif;
    font-size: 14px;
}

.start {
    justify-content: center;
    width: 48px;
}

.search {
    display: flex;
    align-items: center;
    gap: 10px;
    width: 287px;
    padding: 0 16px 0 11px;
    border: 1px solid #c9ccce;
    background-color: #fff;
}

.search input {
    flex: 1;
    padding: 0;
}

.search ::placeholder {
    color: #333;
}

.apps {
    display: flex;
    gap: 1px;
    padding-left: 4px;
}

.apps button {
    position: relative;
    justify-content: center;
    width: 48px;
}

.apps button::after {
    content: "";
    position: absolute;
    left: 4px;
    right: 4px;
    bottom: 0;
    height: 2px;
    background-color: #0f70c0;
}

.apps .current {
    background-color: #edf6fa;
}

.apps text {
    fill: #fff;
    font-size: 6px;
    font-weight: bold;
}

.tray {
    display: flex;
    gap: 8px;
    margin-left: auto;
    padding-right: 15px;
}

.weather {
    gap: 8px;
    margin-right: 18px;
}

.lang {
    font-size: 12px;
}

.clock {
    flex-direction: column;
    justify-content: center;
    margin-left: 4px;
    font-size: 12px;
    line-height: 18px;
}

.notes {
    margin-left: 7px;
}
```
